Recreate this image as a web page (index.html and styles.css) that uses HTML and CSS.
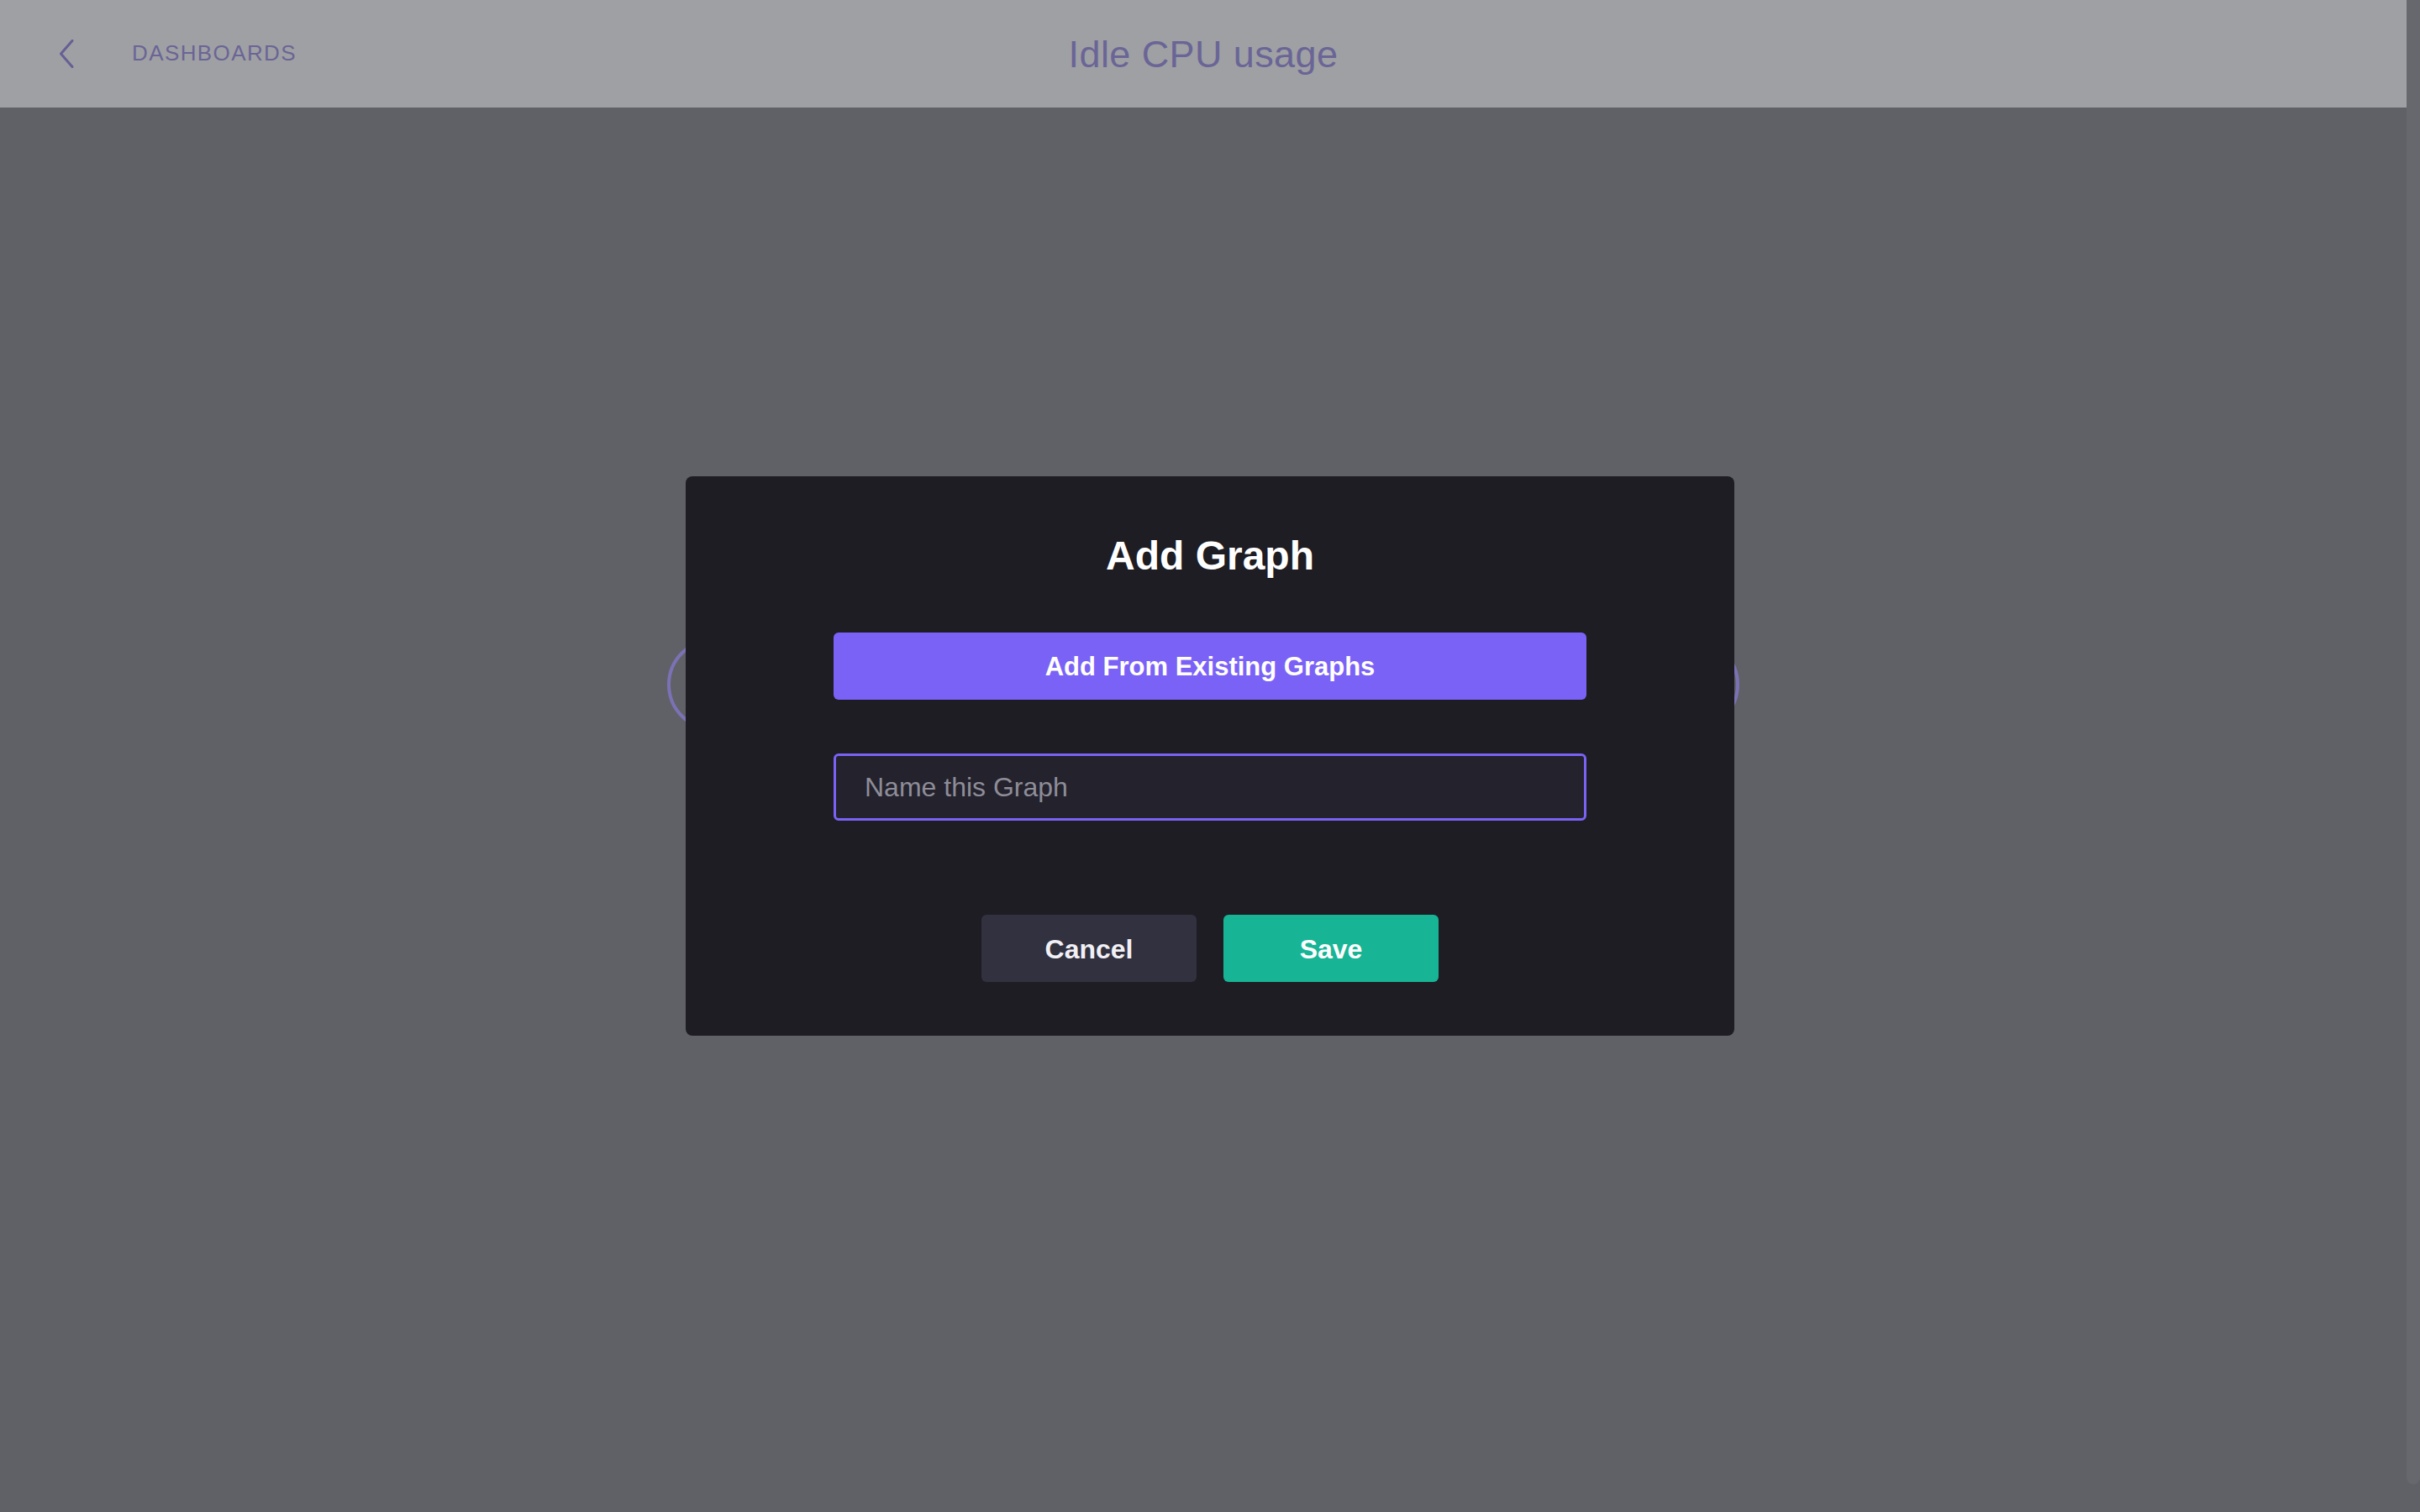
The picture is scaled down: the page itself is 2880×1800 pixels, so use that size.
FILE: index.html
```html
<!DOCTYPE html>
<html lang="en">
<head>
<meta charset="utf-8">
<title>Idle CPU usage</title>
<link rel="stylesheet" href="styles.css">
</head>
<body>
<div class="page">
  <div class="main">
    <header class="topbar">
      <div class="topbar-left">
        <svg class="back-icon" width="18" height="34" viewBox="0 0 18 34" aria-hidden="true">
          <polyline points="16,1.5 2.5,17 16,32.5" fill="none" stroke="currentColor" stroke-width="3" stroke-linecap="round" stroke-linejoin="round"/>
        </svg>
        <span class="crumb">DASHBOARDS</span>
      </div>
      <h1 class="page-title">Idle CPU usage</h1>
      <div class="topbar-right"></div>
    </header>
    <section class="canvas">
      <div class="nav-row">
        <span class="nav-circle"></span>
        <span class="nav-circle"></span>
      </div>
    </section>
  </div>
  <div class="scrollbar"><div class="scroll-thumb"></div></div>
</div>

<div class="modal-layer">
  <div class="modal">
    <h2 class="modal-title">Add Graph</h2>
    <button class="btn-existing">Add From Existing Graphs</button>
    <input class="name-input" type="text" placeholder="Name this Graph">
    <div class="modal-actions">
      <button class="btn btn-cancel">Cancel</button>
      <button class="btn btn-save">Save</button>
    </div>
  </div>
</div>
</body>
</html>
```

FILE: styles.css
```css
* { box-sizing: border-box; }

html, body {
  margin: 0;
  padding: 0;
  height: 100%;
}

body {
  background: #606166;
  font-family: "Liberation Sans", Helvetica, Arial, sans-serif;
  overflow: hidden;
}

.page {
  display: flex;
  height: 1800px;
}

.main {
  flex: 1;
  display: flex;
  flex-direction: column;
}

.topbar {
  height: 128px;
  background: #9fa0a4;
  display: grid;
  grid-template-columns: 1fr auto 1fr;
  align-items: center;
}

.topbar-left {
  display: flex;
  align-items: center;
  padding-left: 70px;
  gap: 69px;
  color: #6a6596;
}

.back-icon {
  display: block;
  color: #675f94;
}

.crumb {
  font-size: 26px;
  letter-spacing: 1.4px;
  color: #6a6596;
  line-height: 1;
  margin-top: -2px;
}

.page-title {
  margin: 0;
  font-size: 45px;
  font-weight: 400;
  letter-spacing: 0.4px;
  color: #6a6596;
  line-height: 1;
}

.canvas {
  flex: 1;
  padding-top: 632px;
  display: flex;
  justify-content: center;
}

.nav-row {
  width: 1276px;
  height: 110px;
  display: flex;
  justify-content: space-between;
}

.nav-circle {
  width: 110px;
  height: 110px;
  border-radius: 50%;
  border: 4px solid #7a72b5;
}

.scrollbar {
  width: 16px;
  height: 100%;
}

.scroll-thumb {
  height: 1767px;
  background: #67686d;
  border-radius: 0 0 8px 8px;
}

.modal-layer {
  position: fixed;
  inset: 0;
  display: flex;
  align-items: center;
  justify-content: center;
}

.modal {
  width: 1248px;
  height: 666px;
  background: #1e1d23;
  border-radius: 8px;
  padding: 71px 176px 64px;
  display: flex;
  flex-direction: column;
  align-items: stretch;
}

.modal-title {
  margin: 0;
  font-size: 48px;
  line-height: 48px;
  font-weight: 700;
  color: #ffffff;
  text-align: center;
}

.btn-existing {
  margin-top: 67px;
  height: 80px;
  border: none;
  border-radius: 6px;
  background: #7b62f6;
  color: #ffffff;
  font-family: inherit;
  font-size: 31px;
  font-weight: 700;
  padding: 2px 0 0;
}

.name-input {
  margin-top: 64px;
  height: 80px;
  border: 3px solid #7b62f6;
  border-radius: 6px;
  background: #23222d;
  color: #ffffff;
  font-family: inherit;
  font-size: 32px;
  padding: 0 34px;
  outline: none;
}

.name-input::placeholder {
  color: #8e8d98;
}

.modal-actions {
  margin-top: 112px;
  display: flex;
  justify-content: center;
  gap: 32px;
}

.btn {
  width: 256px;
  height: 80px;
  border: none;
  border-radius: 6px;
  font-family: inherit;
  font-size: 32px;
  font-weight: 700;
  padding: 2px 0 0;
}

.btn-cancel {
  background: #32313f;
  color: #f1f0f5;
}

.btn-save {
  background: #17b495;
  color: #ffffff;
}
```
